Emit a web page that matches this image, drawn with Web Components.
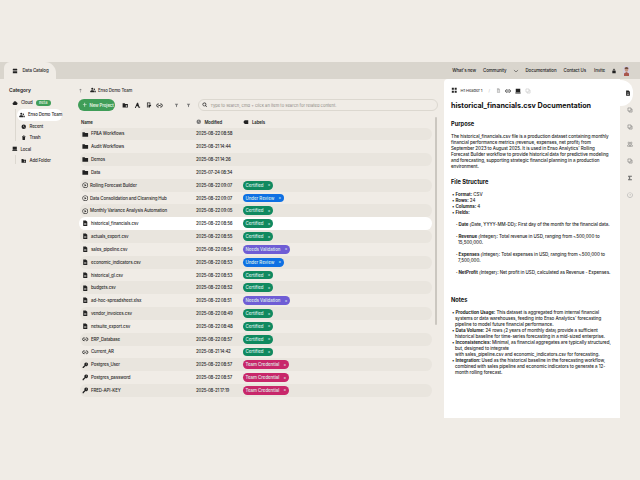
<!DOCTYPE html>
<html>
<head>
<meta charset="utf-8">
<title>Data Catalog</title>
<style>
  html, body { margin: 0; height: 100%; background: #f0ece6; overflow: hidden; }
  body { padding-top: 62px; box-sizing: border-box; font-family: Inter, "Liberation Sans", sans-serif; color: #222; }
</style>
</head>
<body>
<app-shell></app-shell>

<script>
(function () {
  'use strict';

  // tiny icon set, all drawn on a 16x16 box
  const ICONS = {
    menu: '<rect x="2" y="2" width="12" height="3.4" rx="1"/><rect x="2" y="6.4" width="12" height="3.4" rx="1"/><rect x="2" y="10.8" width="12" height="3.4" rx="1"/>',
    cloud: '<path d="M4.5 13a3.2 3.2 0 0 1-.6-6.3A4.4 4.4 0 0 1 12.2 6 3.6 3.6 0 0 1 12 13z"/>',
    team: '<circle cx="6" cy="4.5" r="2.7"/><circle cx="11.5" cy="6" r="2"/><path d="M1 14v-2.5C1 9.5 3 8.5 6 8.5s5 1 5 3V14z"/><path d="M12 9c2 .1 3.3 1 3.3 2.6V14H12z"/>',
    clock: '<path fill-rule="evenodd" d="M8 1.5a6.5 6.5 0 1 1 0 13 6.5 6.5 0 0 1 0-13zM7.2 4.5v4l3 1.8.7-1.1-2.4-1.4V4.5z"/>',
    trash: '<path d="M3 3h10v2H3z"/><path d="M6 1.5h4V3H6z"/><path d="M4 6h8l-.6 8.5H4.6z"/>',
    local: '<path d="M2 2h12v9H2z"/><path d="M1 12h14v2.5H1z"/>',
    folderadd: '<path d="M1.5 3h5l1.5 2h6.5v8.500h-13z"/><path d="M10 7.500h1.400v1.600H13v1.400h-1.600V12H10v-1.500H8.400V9.100H10z" fill="#f0ece6"/>',
    folder: '<path d="M1 3h5.400l1.600 1.900h7V14H1z"/>',
    up: '<path d="M8 2.500l4 4-1 1-2.300-2.300V14H7.300V5.200L5 7.500l-1-1z"/>',
    doc: '<path fill-rule="evenodd" d="M3 1h6.500L13 4.500V15H3zM5.200 7.500v1.200h5.600V7.500zM5.200 10.500v1.200h5.600v-1.200z"/>',
    play: '<path fill-rule="evenodd" d="M8 1a7 7 0 1 1 0 14A7 7 0 0 1 8 1zm0 1.300a5.700 5.700 0 1 0 0 11.400A5.700 5.700 0 0 0 8 2.300z"/><path d="M6.300 5l4.700 3-4.700 3z"/>',
    link: '<path fill="none" stroke="currentColor" stroke-width="2" d="M6.500 4.500H5a3.500 3.500 0 0 0 0 7h1.500M9.500 4.500H11a3.500 3.500 0 0 1 0 7H9.500M5.500 8h5"/>',
    key: '<path fill-rule="evenodd" d="M10.500 1a4.500 4.500 0 1 1-1.700 8.700L4.500 14v1.500H1.500v-3l4.800-4.800A4.500 4.500 0 0 1 10.500 1zm1 2.500a1.200 1.200 0 1 0 0 2.400 1.200 1.200 0 0 0 0-2.400z"/>',
    plus: '<path d="M7 2.500h2V7h4.500v2H9v4.500H7V9H2.500V7H7z"/>',
    script: '<path d="M2 14.500L7.500 2h2.500l3 9.500h2V14h-4l-1-3.500H6L4.500 14.500z"/>',
    docarrow: '<path d="M2.500 1.500h9v5h-2v-3h-5v11h-2z"/><path d="M6.500 7.500h7v4h-3v3h-4z"/>',
    funnel: '<path d="M2.500 2.500h11L9.500 8v5.500l-3-1.500V8z"/>',
    search: '<path fill-rule="evenodd" d="M7 1.500a5.500 5.500 0 0 1 4.400 8.800l3.400 3.400-1.200 1.200-3.400-3.400A5.500 5.500 0 1 1 7 1.500zm0 1.800a3.700 3.700 0 1 0 0 7.400 3.700 3.700 0 0 0 0-7.400z"/>',
    tag: '<path d="M4.500 3H14v10H4.500L1 8z"/>',
    lock: '<path fill-rule="evenodd" d="M5 7V5a3 3 0 0 1 6 0v2h1.500v7h-9V7zm1.500 0h3V5a1.500 1.500 0 0 0-3 0z"/>',
    chev: '<path d="M2.500 5.500l5.500 5 5.500-5" fill="none" stroke="currentColor" stroke-width="1.300"/>',
    frame: '<path d="M2 2h5v5H2zM9 2h5v5H9zM2 9h5v5H2zM9 9h5v5H9z"/>',
    help: '<path fill-rule="evenodd" d="M8 1a7 7 0 1 1 0 14A7 7 0 0 1 8 1zm0 1.200a5.800 5.800 0 1 0 0 11.600A5.800 5.800 0 0 0 8 2.200z"/><path d="M7.400 10h1.200v1.300H7.400zM8 4.500c1.500 0 2.500.8 2.500 2 0 1.600-1.900 1.500-1.900 3H7.400c0-2 1.900-2 1.900-3 0-.5-.5-.9-1.300-.9s-1.300.4-1.300 1H5.500c0-1.200 1-2.100 2.500-2.100z"/>',
    sum: '<path d="M3 2h10v2.500H6.500L9.500 8l-3 3.500H13V14H3v-2l3.500-4L3 4z"/>',
    stack: '<path fill="none" stroke="currentColor" stroke-width="1.300" d="M2.500 2.500h8v8h-8zM5.500 10.500v3h8v-8h-3"/>',
    people: '<path fill="none" stroke="currentColor" stroke-width="1.300" d="M5 7.500a2.300 2.300 0 1 0 0-4.600 2.300 2.300 0 0 0 0 4.600zM11 7.500a2.300 2.300 0 1 0 0-4.600 2.300 2.300 0 0 0 0 4.600zM1.500 14c0-3 1.500-4.500 3.500-4.500S8 11 8 14zM8 14c0-3 1-4.500 3-4.500s3.500 1.500 3.500 4.500z"/>'
  };

  class XIcon extends HTMLElement {
    connectedCallback() {
      const size = this.getAttribute('size') || 8;
      const name = this.getAttribute('name');
      const color = this.getAttribute('color') || '#222';
      this.attachShadow({ mode: 'open' }).innerHTML = `
        <style>:host { display: inline-flex; flex: none; color: ${color}; } svg { display: block; fill: currentColor; }</style>
        <svg width="${size}" height="${size}" viewBox="0 0 16 16">${ICONS[name] || ''}</svg>`;
    }
  }

  // top strip with the tab and the right hand links
  class TabBar extends HTMLElement {
    connectedCallback() {
      this.attachShadow({ mode: 'open' }).innerHTML = `
        <style>
          :host { display: flex; align-items: center; height: 17px; background: #d9d5cd; font-size: 4.400px; letter-spacing: -.08px; font-weight: 500; color: #222; }
          .tab { display: flex; align-items: center; gap: 4.500px; align-self: stretch; margin-left: 4px; width: 52px; box-sizing: border-box;
                 padding-left: 8px; background: #f0ece6; border-radius: 6px 11px 0 0; }
          .links { margin-left: auto; display: flex; align-items: center; height: 100%; padding-right: 10px; }
          .links span { white-space: nowrap; }
          svg.avatar { display: block; }
        </style>
        <div class="tab"><x-icon name="menu" size="6"></x-icon><span>Data Catalog</span></div>
        <div class="links">
          <span style="margin-right:7px">What's new</span>
          <span style="margin-right:6px">Community</span>
          <x-icon name="chev" size="6" style="margin-right:7px"></x-icon>
          <span style="margin-right:7px">Documentation</span>
          <span style="margin-right:8px">Contact Us</span>
          <span style="margin-right:6px">Invite</span>
          <x-icon name="lock" size="6" style="margin-right:6px"></x-icon>
          <svg class="avatar" width="7" height="10" viewBox="0 0 7 10"><rect width="7" height="10" rx="2.500" fill="#d6d0dc"/><ellipse cx="3.500" cy="3.500" rx="1.800" ry="2.300" fill="#c49682"/><path d="M1.700 3V1.800L3.500 1l1.800.8V3z" fill="#6d4c3e"/><path d="M1 10V7.500L3.500 6 6 7.500V10z" fill="#a9564d"/></svg>
        </div>`;
    }
  }

  class SideBar extends HTMLElement {
    connectedCallback() {
      this.attachShadow({ mode: 'open' }).innerHTML = `
        <style>
          :host { display: block; width: 71px; flex: none; box-sizing: border-box; padding: 7.500px 0 0 9px; font-size: 4.300px; letter-spacing: -.1px; font-weight: 500; color: #2a2a2a; }
          h3 { margin: 0 0 3.800px; font-size: 5px; font-weight: 600; color: #222; line-height: 7px; letter-spacing: -.05px; }
          .row { display: flex; align-items: center; gap: 3px; height: 11.400px; padding-left: 3px; white-space: nowrap; }
          .beta { background: #3f9d58; color: #e8f5e4; border-radius: 4px; padding: 0 3.500px; height: 6.500px; line-height: 6.500px; font-size: 4px; }
          .sub { position: relative; }
          .sub::before { content: ""; position: absolute; left: 6px; top: 0; bottom: 2px; width: .6px; background: #dcd8d0; }
          .sub .row { padding-left: 12px; position: relative; }
          .sub .on { background: #fff; border-radius: 6px; margin-left: 8px; padding-left: 2px; width: 45px; box-sizing: border-box; height: 12px; }
        </style>
        <h3>Category</h3>
        <div class="row"><x-icon name="cloud" size="6"></x-icon><span>Cloud</span><span class="beta">Beta</span></div>
        <div class="sub">
          <div class="row on"><x-icon name="team" size="6"></x-icon><span>Enso Demo Team</span></div>
          <div class="row"><x-icon name="clock" size="5.500"></x-icon><span>Recent</span></div>
          <div class="row"><x-icon name="trash" size="5.500"></x-icon><span>Trash</span></div>
        </div>
        <div class="row"><x-icon name="local" size="5.500"></x-icon><span>Local</span></div>
        <div class="sub">
          <div class="row"><x-icon name="folderadd" size="5.500"></x-icon><span>Add Folder</span></div>
        </div>`;
    }
  }

  const LABELS = {
    Certified: '#10895f',
    'Under Review': '#0e70e3',
    'Needs Validation': '#6f5dd5',
    'Team Credential': '#c8276a'
  };

  class LabelPill extends HTMLElement {
    connectedCallback() {
      const text = this.getAttribute('text');
      this.attachShadow({ mode: 'open' }).innerHTML = `
        <style>
          :host { display: inline-flex; align-items: center; height: 8.800px; border-radius: 4.400px; padding: 0 3px 0 2.500px; gap: 4.200px;
                  background: ${LABELS[text]}; color: #dff1ea; font-size: 4.400px; letter-spacing: -.03px; font-weight: 500; white-space: nowrap; }
          i { font-style: normal; font-size: 4px; line-height: 1; }
        </style>
        <span>${text}</span><i>×</i>`;
    }
  }

  const ROWS = [
    ['folder', 'FP&A Workflows', '2025-08-22 08:58'],
    ['folder', 'Audit Workflows', '2025-08-21 14:44'],
    ['folder', 'Demos', '2025-08-21 14:26'],
    ['folder', 'Data', '2025-07-24 08:34'],
    ['play', 'Rolling Forecast Builder', '2025-08-22 09:07', 'Certified'],
    ['play', 'Data Consolidation and Cleansing Hub', '2025-08-22 09:07', 'Under Review'],
    ['play', 'Monthly Variance Analysis Automation', '2025-08-22 09:05', 'Certified'],
    ['doc', 'historical_financials.csv', '2025-08-22 08:56', 'Certified', true],
    ['doc', 'actuals_export.csv', '2025-08-22 08:55', 'Certified'],
    ['doc', 'sales_pipeline.csv', '2025-08-22 08:54', 'Needs Validation'],
    ['doc', 'economic_indicators.csv', '2025-08-22 08:53', 'Under Review'],
    ['doc', 'historical_gl.csv', '2025-08-22 08:53', 'Certified'],
    ['doc', 'budgets.csv', '2025-08-22 08:52', 'Certified'],
    ['doc', 'ad-hoc-spreadsheet.xlsx', '2025-08-22 08:51', 'Needs Validation'],
    ['doc', 'vendor_invoices.csv', '2025-08-22 08:49', 'Certified'],
    ['doc', 'netsuite_export.csv', '2025-08-22 08:48', 'Certified'],
    ['link', 'ERP_Database', '2025-08-22 08:57', 'Certified'],
    ['link', 'Current_AR', '2025-08-21 14:42', 'Certified'],
    ['key', 'Postgres_User', '2025-08-22 08:57', 'Team Credential'],
    ['key', 'Postgres_password', '2025-08-22 08:57', 'Team Credential'],
    ['key', 'FRED-API-KEY', '2025-08-21 17:19', 'Team Credential']
  ];

  class AssetRow extends HTMLElement {
    connectedCallback() {
      const kind = this.getAttribute('kind');
      const label = this.getAttribute('label');
      const gap = kind === 'play' ? 1.5 : 2.5;
      this.attachShadow({ mode: 'open' }).innerHTML = `
        <style>
          :host { display: grid; grid-template-columns: 114px 47px 1fr; align-items: center; height: 12.830px; box-sizing: border-box;
                  padding-left: 2px; border-radius: 6.400px; font-size: 4.400px; letter-spacing: -.11px; color: #2a2a2a; white-space: nowrap; }
          :host([odd]) { background: #e9e5de; }
          :host([active]) { background: #fff; margin-left: -1px; padding-left: 3px; }
          .name { display: flex; align-items: center; gap: ${gap}px; font-weight: 500; }
          .date { font-weight: 500; color: #262626; letter-spacing: -.2px; }
          .lab { display: flex; }
        </style>
        <div class="name"><x-icon name="${kind}" size="6.500"></x-icon><span><slot></slot></span></div>
        <div class="date">${this.getAttribute('date')}</div>
        <div class="lab">${label ? `<label-pill text="${label}"></label-pill>` : ''}</div>`;
    }
  }

  class AssetTable extends HTMLElement {
    connectedCallback() {
      const root = this.attachShadow({ mode: 'open' });
      root.innerHTML = `
        <style>
          :host { display: block; flex: 1; min-width: 0; box-sizing: border-box; padding: 7.500px 12px 0 9px; }
          .crumb { display: flex; align-items: center; height: 7px; font-size: 4.300px; letter-spacing: -.1px; font-weight: 500; color: #333; margin-left: -2px; gap: 2px; }
          .tools { display: flex; align-items: center; height: 12px; margin: 5.500px -6px 0 -2px; }
          .new { display: flex; align-items: center; gap: 2.500px; background: #3f9d58; color: #e4f3e2; height: 12px; width: 37px; box-sizing: border-box; border-radius: 6px; padding-left: 3.500px;
                 font-size: 4.300px; letter-spacing: -.08px; font-weight: 600; white-space: nowrap; margin-right: 7px; }
          .search { flex: 1; display: flex; align-items: center; gap: 3px; height: 12px; margin-left: 7px; padding-left: 3px; border: .5px solid #dcd8d0;
                    border-radius: 6px; font-size: 4.100px; color: #8d8a85; white-space: nowrap; box-sizing: border-box; }
          .head { display: grid; grid-template-columns: 115px 47px 1fr; align-items: center; height: 11px; margin-top: 5.500px; padding-left: 1px;
                  font-size: 4.300px; letter-spacing: -.1px; font-weight: 600; color: #222; }
          .head div { display: flex; align-items: center; gap: 3px; }
          .wrap { position: relative; }
          .track { position: absolute; right: -5px; top: -10.500px; height: 208px; width: 2.500px; border-radius: 2px; background: #cbc7c0; }
        </style>
        <div class="crumb"><x-icon name="up" size="5" color="#777"></x-icon><x-icon name="team" size="6" style="margin-left:5px"></x-icon><span>Enso Demo Team</span></div>
        <div class="tools">
          <div class="new"><x-icon name="plus" size="5.500" color="#e4f3e2"></x-icon><span>New Project</span></div>
          <x-icon name="folderadd" size="6.500" style="margin-right:5.500px"></x-icon>
          <x-icon name="script" size="6.500" style="margin-right:5.500px"></x-icon>
          <x-icon name="docarrow" size="6" style="margin-right:4px"></x-icon>
          <x-icon name="link" size="7" style="margin-right:11px"></x-icon>
          <x-icon name="funnel" size="5" color="#777" style="margin-right:7px"></x-icon>
          <x-icon name="funnel" size="5" color="#777"></x-icon>
          <div class="search"><x-icon name="search" size="5.500"></x-icon><span>Type to search, cmd + click an item to search for related content.</span></div>
        </div>
        <div class="head">
          <div><span>Name</span></div>
          <div><x-icon name="clock" size="5.500" color="#777"></x-icon><span>Modified</span></div>
          <div><x-icon name="tag" size="6"></x-icon><span>Labels</span></div>
        </div>
        <div class="wrap"><div class="track"></div><div id="rows"></div></div>`;
      const host = root.getElementById('rows');
      ROWS.forEach((r, i) => {
        const el = document.createElement('asset-row');
        el.setAttribute('kind', r[0]);
        el.setAttribute('date', r[2]);
        if (r[3]) el.setAttribute('label', r[3]);
        if (i % 2 === 0 && !r[4]) el.toggleAttribute('odd', true);
        if (r[4]) el.toggleAttribute('active', true);
        el.textContent = r[1];
        host.appendChild(el);
      });
    }
  }

  class DocPanel extends HTMLElement {
    connectedCallback() {
      this.attachShadow({ mode: 'open' }).innerHTML = `
        <style>
          :host { display: block; width: 176px; flex: none; height: 338.500px; box-sizing: border-box; background: #fff; border-radius: 4px 0 0 0;
                  padding: 7px 9px 0 7px; font-size: 4.500px; letter-spacing: -.05px; line-height: 6px; color: #262626; font-weight: 500; overflow: hidden; }
          .bar { display: flex; align-items: center; gap: 4px; height: 9px; color: #444; font-size: 4px; }
          h1 { margin: 5px 0 0; font-size: 7.200px; letter-spacing: -.03px; line-height: 12px; font-weight: 700; color: #111; white-space: nowrap; }
          h2 { margin: 0; font-size: 5.700px; letter-spacing: 0; line-height: 9px; font-weight: 700; color: #111; }
          p { margin: 0; }
          ul { margin: 0; padding: 0; list-style: none; }
          li { padding-left: 4px; text-indent: -3px; }
          li::before { content: "• "; }
          b { font-weight: 700; color: #222; }
          .field { margin: 0 0 6px 5px; padding-left: 2px; text-indent: -2px; }
          .field b::before { content: "· "; }
        </style>
        <div class="bar">
          <x-icon name="frame" size="6.500"></x-icon><span style="margin-left:-1px">H1 Header 1</span>
          <span style="color:#bbb;margin-left:2px">/</span><x-icon name="doc" size="5" color="#bbb" style="margin-left:2px"></x-icon>
          <x-icon name="link" size="6"></x-icon><x-icon name="local" size="6"></x-icon><x-icon name="stack" size="6" color="#bbb"></x-icon>
        </div>
        <h1>historical_financials.csv Documentation</h1>
        <h2 style="margin-top:7px">Purpose</h2>
        <p style="margin-top:6px">The historical_financials.csv file is a production dataset containing monthly financial performance metrics (revenue, expenses, net profit) from September 2023 to August 2025. It is used in Enso Analytics' Rolling Forecast Builder workflow to provide historical data for predictive modeling and forecasting, supporting strategic financial planning in a production environment.</p>
        <h2 style="margin-top:6.500px">File Structure</h2>
        <ul style="margin-top:6.500px">
          <li><b>Format:</b> CSV</li>
          <li><b>Rows:</b> 24</li>
          <li><b>Columns:</b> 4</li>
          <li><b>Fields:</b></li>
        </ul>
        <div class="field" style="margin-top:6px"><b>Date</b> (Date, YYYY-MM-DD): First day of the month for the financial data.</div>
        <div class="field"><b>Revenue</b> (Integer): Total revenue in USD, ranging from ~500,000 to 15,500,000.</div>
        <div class="field"><b>Expenses</b> (Integer): Total expenses in USD, ranging from ~500,000 to 7,500,000.</div>
        <div class="field"><b>NetProfit</b> (Integer): Net profit in USD, calculated as Revenue - Expenses.</div>
        <h2 style="margin-top:18.800px">Notes</h2>
        <ul style="margin-top:5.900px">
          <li><b>Production Usage:</b> This dataset is aggregated from internal financial systems or data warehouses, feeding into Enso Analytics' forecasting pipeline to model future financial performance.</li>
          <li><b>Data Volume:</b> 24 rows (2 years of monthly data) provide a sufficient historical baseline for time-series forecasting in a mid-sized enterprise.</li>
          <li><b>Inconsistencies:</b> Minimal, as financial aggregates are typically structured, but, designed to integrate<br>with sales_pipeline.csv and economic_indicators.csv for forecasting.</li>
          <li><b>Integration:</b> Used as the historical baseline in the forecasting workflow, combined with sales pipeline and economic indicators to generate a 12-month rolling forecast.</li>
        </ul>`;
    }
  }

  class SideRail extends HTMLElement {
    connectedCallback() {
      this.attachShadow({ mode: 'open' }).innerHTML = `
        <style>
          :host { display: flex; flex-direction: column; align-items: center; width: 20px; flex: none; padding-top: 1px; box-sizing: border-box; }
          .on { align-self: flex-start; width: 13px; height: 26px; margin-bottom: -4.500px; padding-left: 5px; box-sizing: border-box; background: #fff; border-radius: 0 12px 12px 0; display: flex; align-items: center; }
          .i { height: 17px; display: flex; align-items: center; }
        </style>
        <div class="on"><x-icon name="doc" size="6"></x-icon></div>
        <div class="i"><x-icon name="stack" size="6" color="#666"></x-icon></div>
        <div class="i"><x-icon name="stack" size="6" color="#666"></x-icon></div>
        <div class="i"><x-icon name="people" size="6" color="#666"></x-icon></div>
        <div class="i"><x-icon name="stack" size="6" color="#666"></x-icon></div>
        <div class="i"><x-icon name="sum" size="6" color="#666"></x-icon></div>
        <div class="i"><x-icon name="help" size="6" color="#aaa"></x-icon></div>`;
    }
  }

  class AppShell extends HTMLElement {
    connectedCallback() {
      this.attachShadow({ mode: 'open' }).innerHTML = `
        <style>
          :host { display: block; }
          .main { display: flex; align-items: flex-start; }
        </style>
        <tab-bar></tab-bar>
        <div class="main">
          <side-bar></side-bar>
          <asset-table></asset-table>
          <doc-panel></doc-panel>
          <side-rail></side-rail>
        </div>`;
    }
  }

  customElements.define('x-icon', XIcon);
  customElements.define('tab-bar', TabBar);
  customElements.define('side-bar', SideBar);
  customElements.define('label-pill', LabelPill);
  customElements.define('asset-row', AssetRow);
  customElements.define('asset-table', AssetTable);
  customElements.define('doc-panel', DocPanel);
  customElements.define('side-rail', SideRail);
  customElements.define('app-shell', AppShell);
})();
</script>
</body>
</html>
